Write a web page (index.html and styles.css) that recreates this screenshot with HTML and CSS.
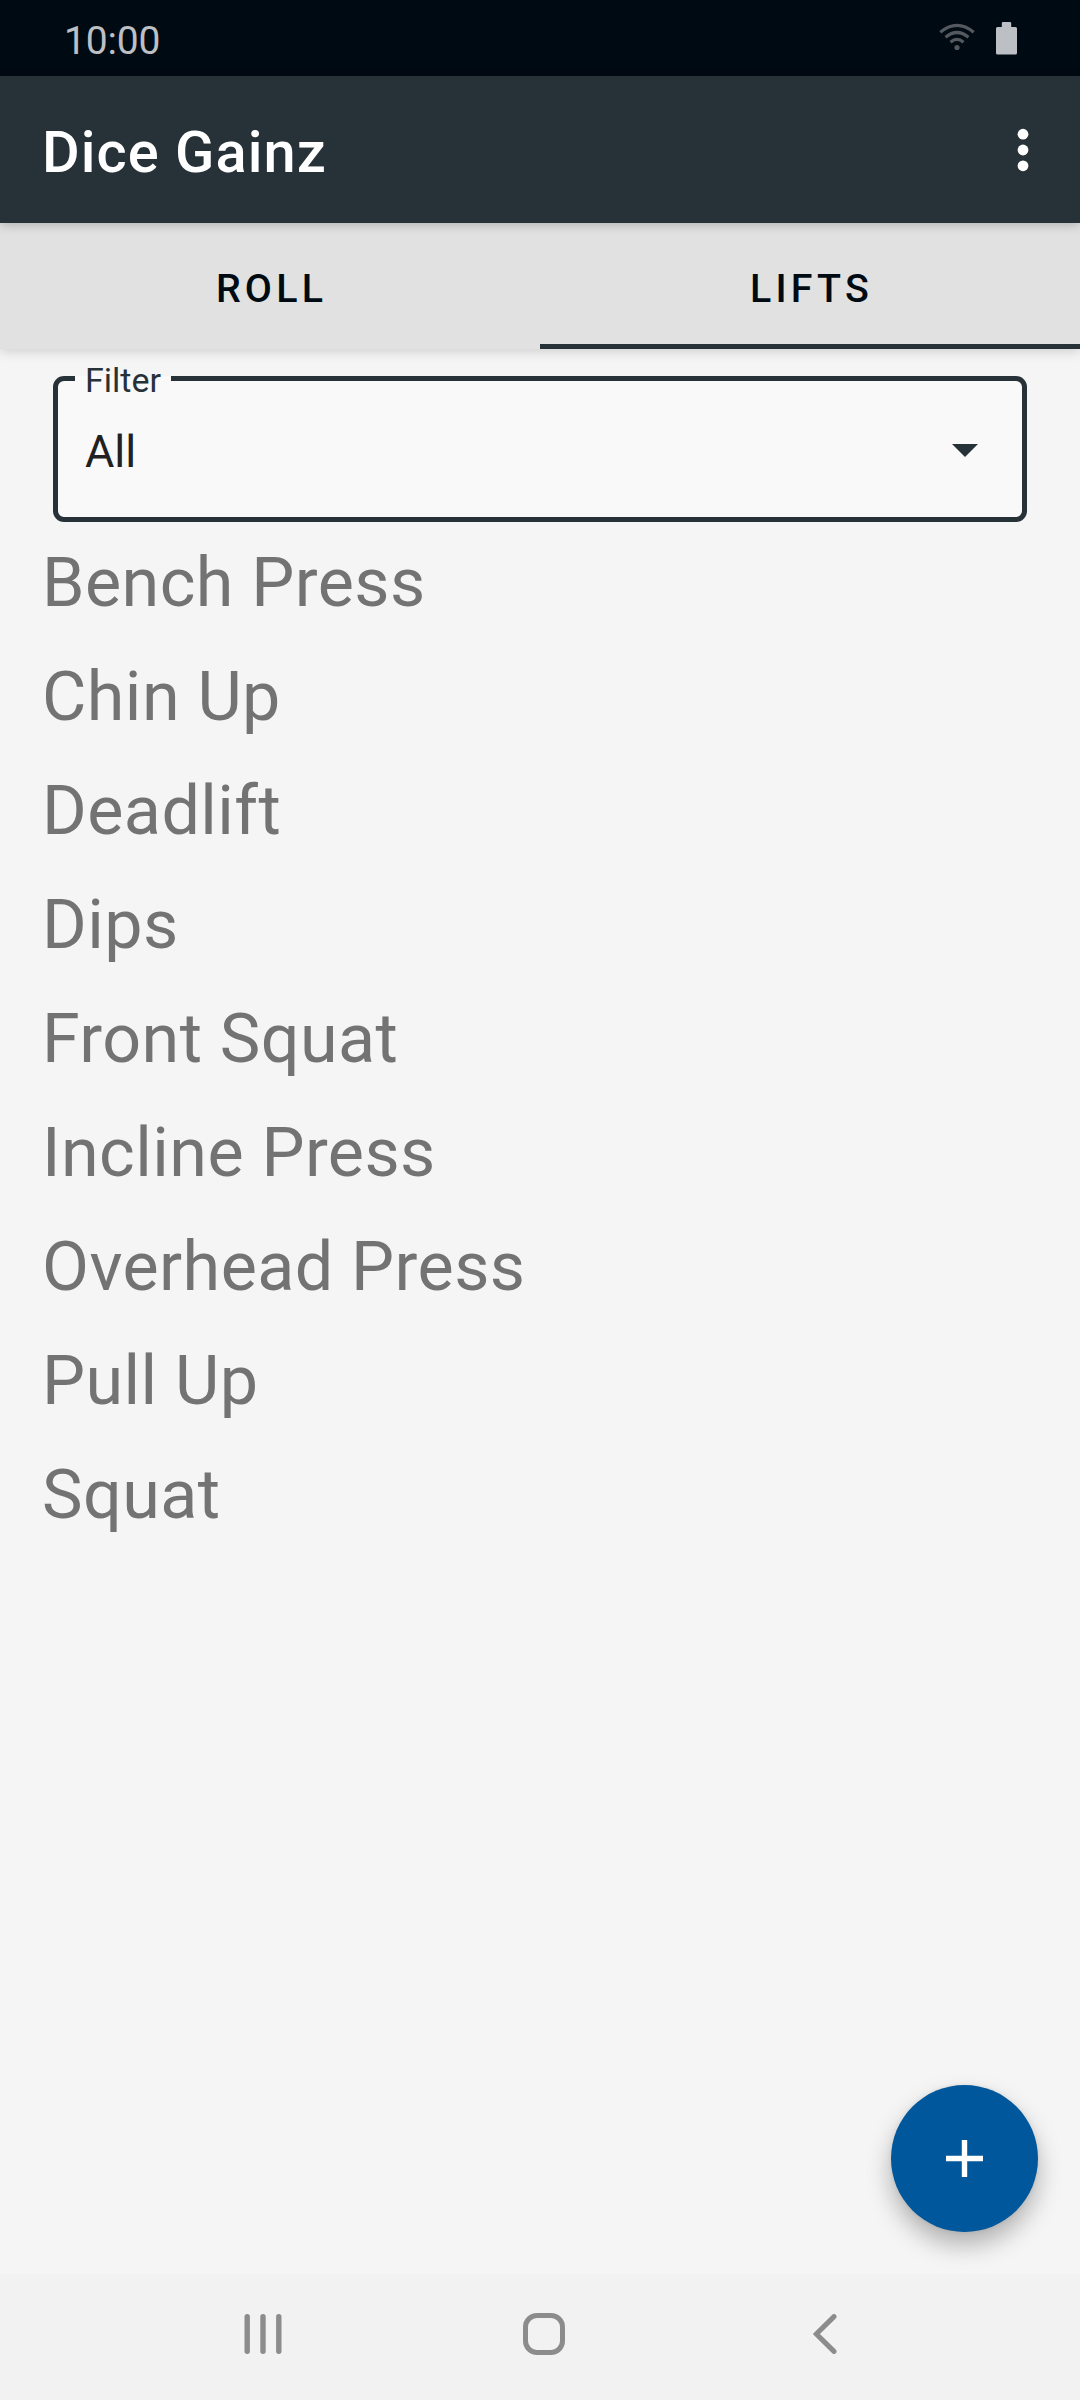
FILE: index.html
```html
<!DOCTYPE html>
<html lang="en">
<head>
<meta charset="utf-8">
<title>Dice Gainz</title>
<link rel="stylesheet" href="styles.css">
</head>
<body>
<div class="screen">
  <div class="status">
    <span class="clock">10:00</span>
    <svg class="wifi" width="36" height="28" viewBox="0 0 36 28" fill="none" stroke="#53595f" stroke-width="3.2"><path d="M1.3 9.3Q18-4.5 34.7 9.3M6.5 14.2Q18 4.8 29.5 14.2M11.5 19.3Q18 13.5 24.5 19.3"/><circle cx="18" cy="24.5" r="2.6" fill="#53595f" stroke="none"/></svg>
    <svg class="battery" width="21" height="33" viewBox="0 0 21 33" fill="#bcc0c4"><path d="M7 0h7a1.2 1.2 0 0 1 1.2 1.2V5h4.3A1.5 1.5 0 0 1 21 6.500V31a1.500 1.500 0 0 1-1.500 1.500h-18A1.500 1.500 0 0 1 0 31V6.500A1.500 1.500 0 0 1 1.500 5h4.300V1.200A1.200 1.200 0 0 1 7 0z"/></svg>
  </div>
  <header class="appbar">
    <h1>Dice Gainz</h1>
    <svg width="12" height="44" viewBox="0 0 12 44" fill="#fff"><circle cx="6" cy="6.200" r="5.400"/><circle cx="6" cy="22" r="5.400"/><circle cx="6" cy="37.800" r="5.400"/></svg>
  </header>
  <nav class="tabs"><span class="tab">ROLL</span><span class="tab active">LIFTS</span></nav>
  <main class="content">
    <div class="field">
      <span class="label">Filter</span>
      <span class="value">All</span>
      <svg width="26" height="13" viewBox="0 0 26 13" fill="#263238"><path d="M0 0h26L13 13z"/></svg>
    </div>
    <ul class="lifts">
      <li>Bench Press</li><li>Chin Up</li><li>Deadlift</li><li>Dips</li><li>Front Squat</li><li>Incline Press</li><li>Overhead Press</li><li>Pull Up</li><li>Squat</li>
    </ul>
    <button class="fab" aria-label="Add lift"><svg width="37" height="37" viewBox="0 0 37 37" fill="#fff"><path d="M15.800 0h5.400v15.800H37v5.400H21.200V37h-5.400V21.200H0v-5.400h15.800z"/></svg></button>
  </main>
  <footer class="navbar">
    <svg class="recents" width="38" height="40" viewBox="0 0 38 40" fill="#8c8c8c"><rect x="0.500" width="5.400" height="40" rx="2.700"/><rect x="16.300" width="5.400" height="40" rx="2.700"/><rect x="32.100" width="5.400" height="40" rx="2.700"/></svg>
    <svg class="home" width="42" height="42" viewBox="0 0 42 42" fill="none" stroke="#8c8c8c" stroke-width="5"><rect x="2.500" y="2.500" width="37" height="37" rx="11.500"/></svg>
    <svg class="back" width="24" height="40" viewBox="0 0 24 40" fill="none" stroke="#8c8c8c" stroke-width="5" stroke-linecap="round"><path d="M21 2.600L3.400 20 21 37.400"/></svg>
  </footer>
</div>
</body>
</html>
```
FILE: styles.css
```css
* { box-sizing: border-box; }
body { margin: 0; font-family: Roboto, sans-serif; background: #f5f5f5; }
.screen { display: flex; flex-direction: column; width: 1080px; height: 2400px; }
.status { display: flex; align-items: center; height: 76px; padding: 0 63px 0 64px; background: #000a12; }
.clock { margin-right: auto; padding-top: 7px; font-size: 39px; line-height: 71px; letter-spacing: -.2px; color: #bcc0c4; }
.wifi { margin: 0 21px 2px 0; }
.appbar { position: relative; z-index: 2; display: flex; align-items: center; justify-content: space-between; height: 147px; padding: 0 51px 0 42px; background: #263238; box-shadow: 0 2px 10px rgba(0,0,0,.22); }
.appbar h1 { margin: 0; padding-top: 4px; font-size: 57.75px; font-weight: 500; letter-spacing: 1.05px; color: #fff; }
.tabs { position: relative; z-index: 1; display: flex; height: 126px; background: #e1e1e1; box-shadow: 0 3px 11px rgba(0,0,0,.15); }
.tab { flex: 1; padding-left: 3px; text-align: center; font-size: 39.375px; font-weight: 500; line-height: 132px; letter-spacing: 4.2px; color: #000a12; }
.active { border-bottom: 5px solid #263238; }
.content { position: relative; flex: 1; padding: 27px 0 0; }
.field { position: relative; display: flex; align-items: center; justify-content: space-between; height: 146px; margin: 0 53px; padding: 3px 44px 0 27px; border: 5px solid #263238; border-radius: 11px; background: #f9f9f9; }
.label { position: absolute; left: 17px; top: -21px; padding: 0 10px; font-size: 34px; line-height: 40px; color: #263238; background: linear-gradient(#f5f5f5 40%, #f9f9f9 40%); }
.value { padding-top: 1px; font-size: 45px; color: #212121; }
.lifts { list-style: none; margin: 2px 0 0; padding: 0 42px; }
.lifts li { height: 114px; font-size: 68.25px; line-height: 118px; letter-spacing: .43px; color: #737373; }
.fab { position: absolute; right: 42px; bottom: 42px; display: flex; align-items: center; justify-content: center; width: 147px; height: 147px; padding: 0; border: 0; border-radius: 50%; background: #01579b; box-shadow: 0 13px 24px rgba(0,0,0,.28), 0 0 5px rgba(0,0,0,.08); }
.navbar { display: flex; align-items: center; height: 126px; padding: 0 0 6px 244px; background: #f2f2f2; }
.home { margin-left: 241px; }
.back { margin-left: 248px; }
```
